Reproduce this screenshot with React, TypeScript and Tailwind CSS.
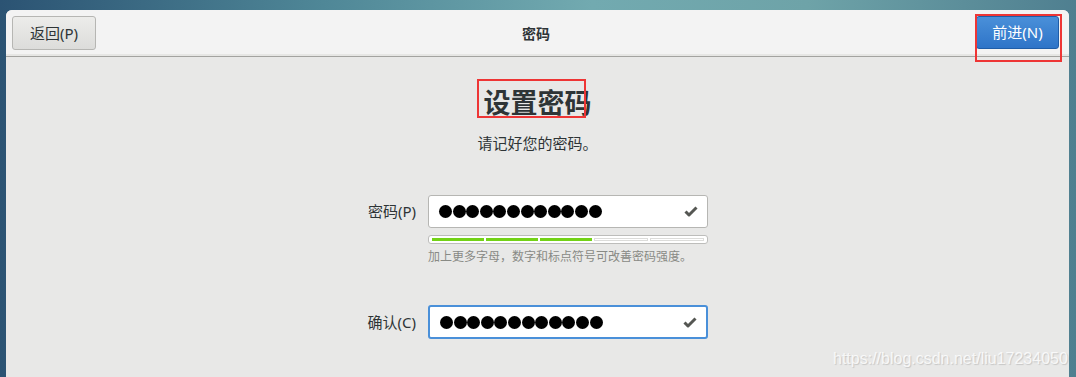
import React from "react";

const Dots = () => (
  <div className="flex gap-[0.6px]">
    {Array.from({ length: 12 }).map((_, i) => (
      <div key={i} className="w-[13px] h-[13px] rounded-full bg-black" />
    ))}
  </div>
);

const Check = () => (
  <svg width="14" height="11" viewBox="0 0 14 11" className="block">
    <path d="M1.5 5.5 L5 9 L12.5 1.5" fill="none" stroke="#555753" strokeWidth="3" strokeLinejoin="round" />
  </svg>
);

export default function App() {
  return (
    <div
      className="relative w-[1076px] h-[377px] overflow-hidden pt-[10px] pl-[6px] pr-[7px]"
      style={{ fontFamily: '"Noto Sans", "Noto Sans CJK SC", sans-serif' }}
    >
      <div className="absolute inset-0 -z-10 bg-[linear-gradient(90deg,#2b5373_0%,#4f8797_30%,#72aab0_55%,#6ea3a8_75%,#4f7f90_100%)]" />
      <div className="h-full flex flex-col rounded-t-[6px] overflow-hidden bg-[#e8e8e7]">
        {/* header */}
        <div className="h-[47px] flex items-start pt-[6px] bg-[#f3f3f3] border-b border-[#a3a3a0] shadow-[inset_0_-2px_0_#e6e6e4]">
          <div className="ml-[6px] w-[84px] h-[34px] flex items-center justify-center rounded-[3px] border border-[#b6b6b3] bg-[linear-gradient(#ececea,#dcdcda)] text-[15px] text-[#2e3436]">
            返回(P)
          </div>
          <div className="flex-1 text-center text-[14px] font-bold text-[#2e3436] pt-[7px]">密码</div>
          <div className="mr-[10px] w-[83px] h-[33px] flex items-center justify-center rounded-[3px] border border-[#1f5da8] bg-[linear-gradient(#4a90d9,#2e74c8)] text-[15px] text-white">
            前进(N)
          </div>
        </div>
        {/* body */}
        <div className="flex-1 flex flex-col items-center">
          <div className="mt-[29px] text-[27px] leading-[34px] font-bold text-[#2e3436]">设置密码</div>
          <div className="mt-[13px] text-[15px] leading-[20px] text-[#2e3436]">请记好您的密码。</div>
          <div className="self-start ml-[312px] mt-[42px] flex flex-col">
            <div className="flex items-center">
              <div className="w-[100px] text-right pr-[2px] text-[15px] text-[#2e3436]">密码(P)</div>
              <div className="ml-[10px] w-[280px] h-[33px] flex items-center justify-between pl-[10px] pr-[9px] rounded-[3px] border border-[#b6b6b3] bg-white">
                <Dots />
                <Check />
              </div>
            </div>
            <div className="ml-[110px] mt-[7px] w-[280px] h-[9px] rounded-[3px] border border-[#bdbdbb] bg-white flex gap-[2px] px-[3px] py-[2px]">
              {[0, 1, 2, 3, 4].map((i) => (
                <div key={i} className={i < 3 ? "flex-1 bg-[#73d216]" : "flex-1 border border-[#dcdcda] bg-white"} />
              ))}
            </div>
            <div className="ml-[110px] mt-[5px] text-[12px] leading-[16px] text-[#888a85]">
              加上更多字母，数字和标点符号可改善密码强度。
            </div>
            <div className="flex items-center mt-[40px]">
              <div className="w-[100px] text-right pr-[2px] text-[15px] text-[#2e3436]">确认(C)</div>
              <div className="ml-[10px] w-[280px] h-[34px] flex items-center justify-between pl-[10px] pr-[9px] rounded-[3px] border-2 border-[#4a90d9] bg-white">
                <Dots />
                <Check />
              </div>
            </div>
          </div>
        </div>
      </div>
      {/* annotation boxes */}
      <div className="absolute left-[477px] top-[79px] w-[109px] h-[39px] border-2 border-[#ee3535]" />
      <div className="absolute left-[975px] top-[14px] w-[87px] h-[48px] border-2 border-[#ee3535]" />
      {/* watermark */}
      <div
        className="absolute left-[833px] top-[347px] text-[16px] text-[rgba(255,255,255,0.8)] [text-shadow:1px_1px_1px_rgba(0,0,0,0.15)]"
        style={{ fontFamily: '"Liberation Sans", Arial, sans-serif' }}
      >
        https://blog.csdn.net/liu17234050
      </div>
    </div>
  );
}
